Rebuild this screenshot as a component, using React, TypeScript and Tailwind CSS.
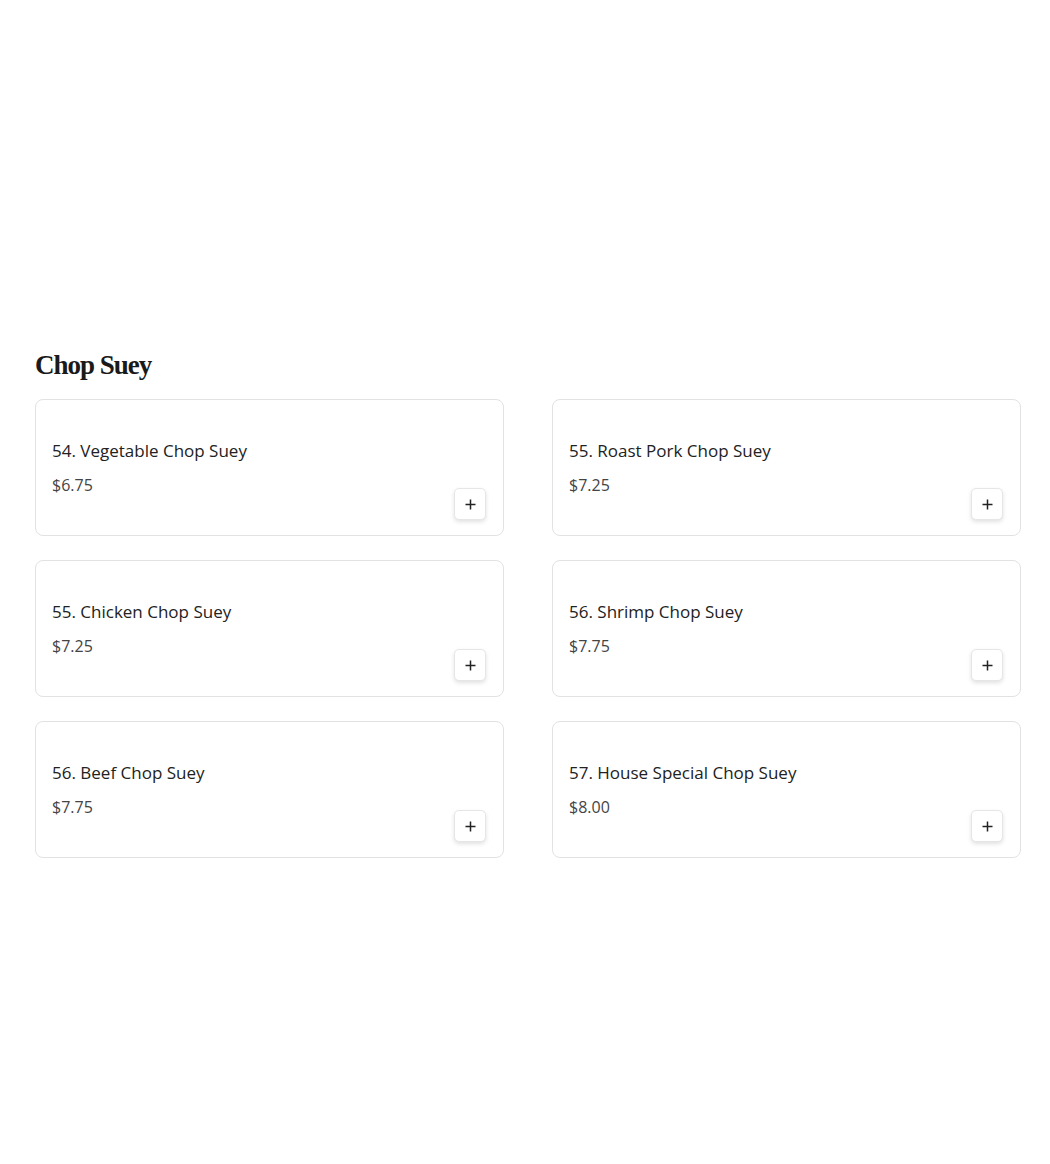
import React from "react";

const items = [
  { name: "54. Vegetable Chop Suey", price: "$6.75" },
  { name: "55. Roast Pork Chop Suey", price: "$7.25" },
  { name: "55. Chicken Chop Suey", price: "$7.25" },
  { name: "56. Shrimp Chop Suey", price: "$7.75" },
  { name: "56. Beef Chop Suey", price: "$7.75" },
  { name: "57. House Special Chop Suey", price: "$8.00" },
];

export default function App() {
  return (
    <div className="min-h-[1164px] bg-white">
      <div className="ml-[35px] w-[986px] pt-[348px]">
        <h2
          className="text-[27px] leading-[34px] font-black text-[#1a1a1a] tracking-[-1px]"
          style={{ fontFamily: '"Liberation Serif", "DejaVu Serif", serif' }}
        >
          Chop Suey
        </h2>
        <div className="mt-[17px] grid grid-cols-2 gap-x-[48px] gap-y-[24px]">
          {items.map((it, i) => (
            <div
              key={i}
              className="flex h-[137px] justify-between rounded-[8px] border border-[#e2e2e2] bg-white pl-4 pr-[16px] pb-[15px]"
              style={{ fontFamily: '"Open Sans", "Liberation Sans", sans-serif' }}
            >
              <div className="flex flex-col pt-[40px]">
                <div className="text-[17px] leading-[22px] font-medium text-[#222]">{it.name}</div>
                <div className="mt-[12px] text-[16px] leading-[22px] text-[#444]">{it.price}</div>
              </div>
              <button className="mr-[1px] flex h-8 w-8 items-center justify-center self-end rounded-[5px] border border-[#e6e6e6] bg-white shadow-[0_2px_4px_rgba(0,0,0,0.12)]">
                <svg width="11" height="11" viewBox="0 0 11 11" fill="none" stroke="#222" strokeWidth="1.5">
                  <path d="M5.5 0.5v10M0.5 5.5h10" />
                </svg>
              </button>
            </div>
          ))}
        </div>
      </div>
    </div>
  );
}
